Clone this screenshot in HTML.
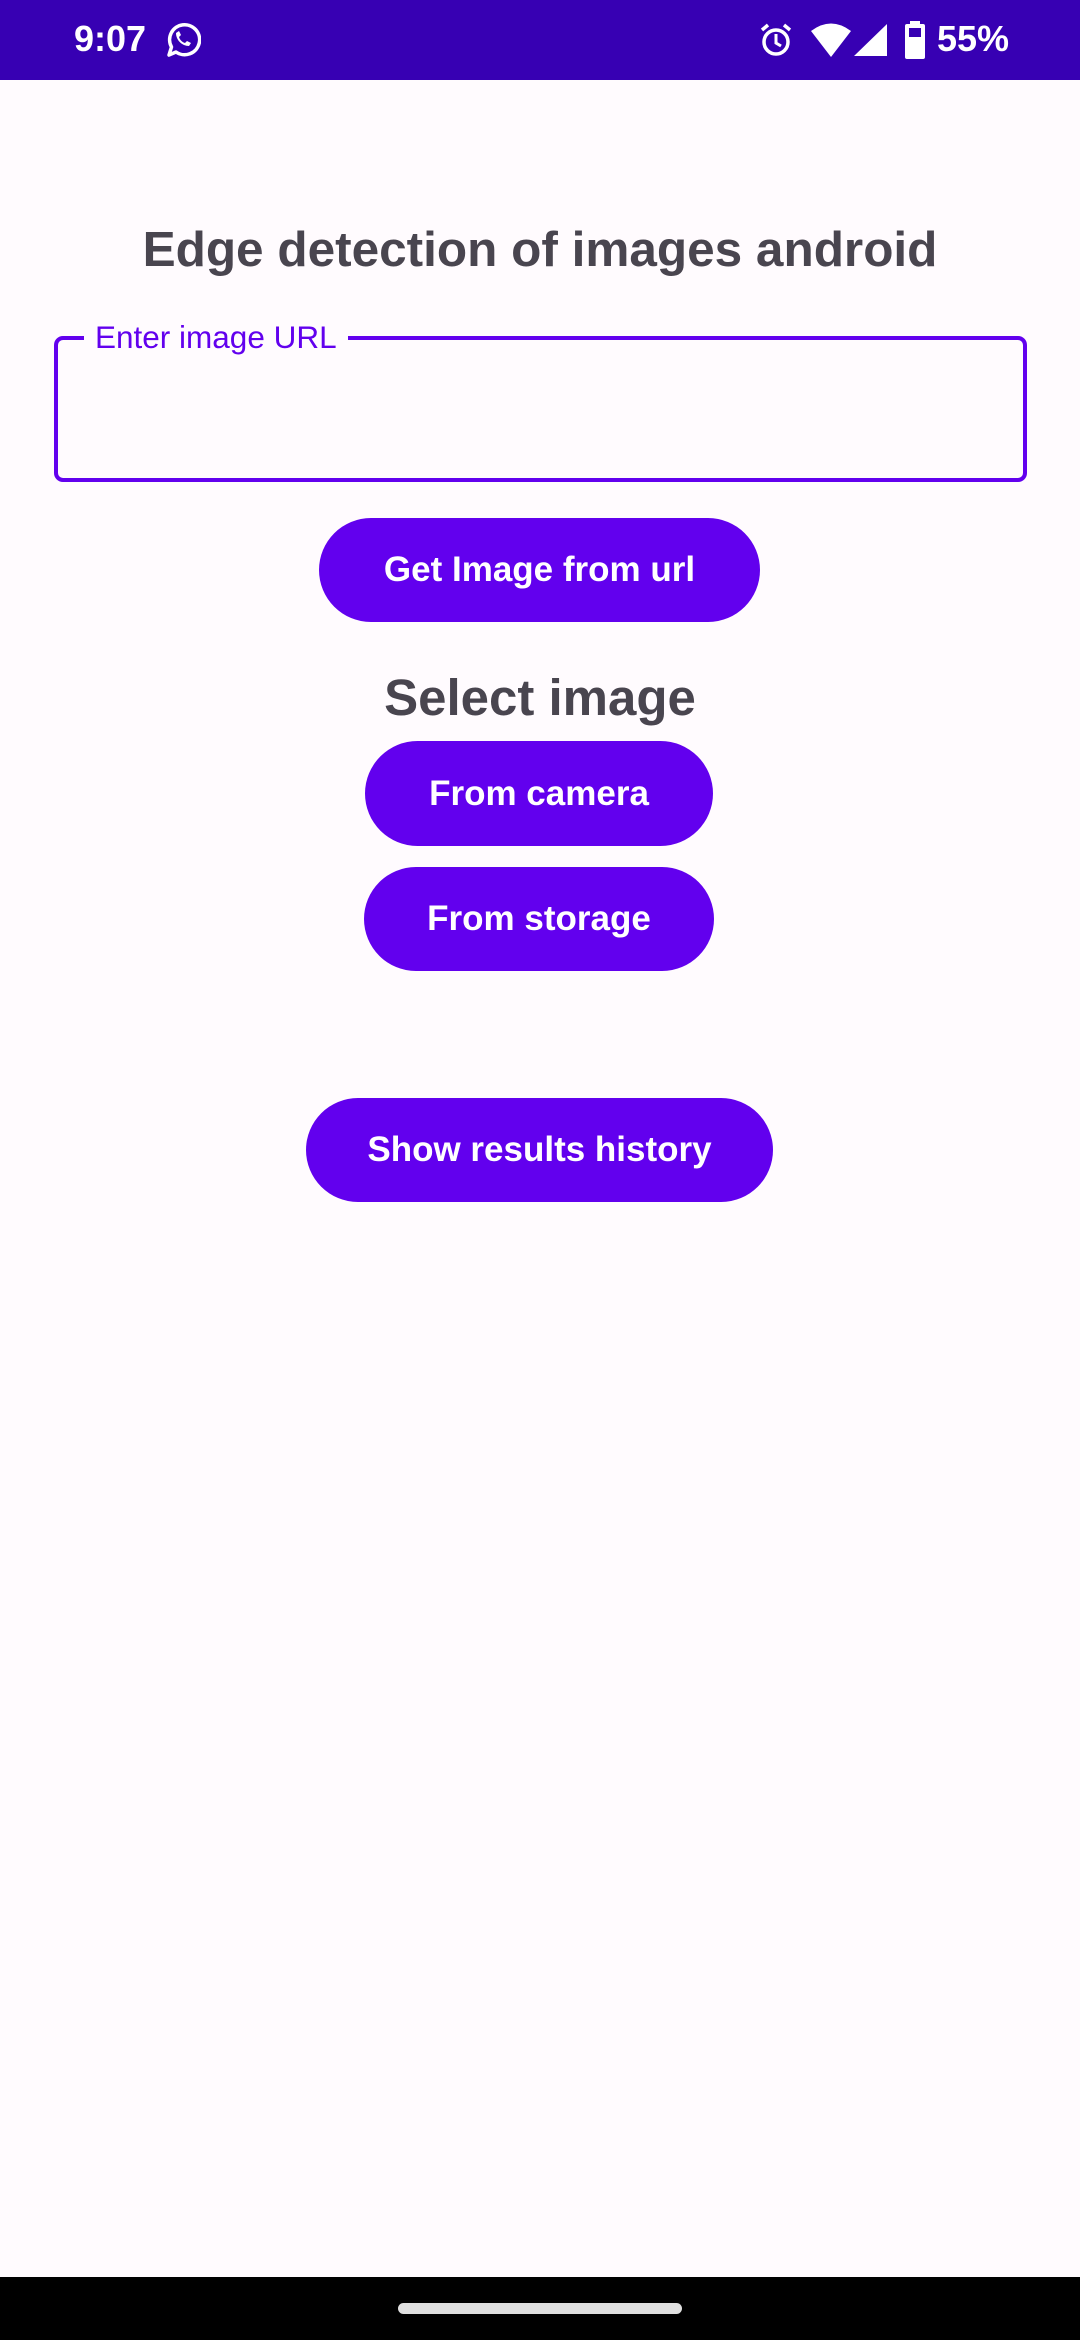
<!DOCTYPE html>
<html><head><meta charset="utf-8"><style>
*{margin:0;padding:0;box-sizing:border-box}
body{width:1080px;height:2340px;background:#FFFBFE;font-family:"Liberation Sans",sans-serif;position:relative;overflow:hidden}
.sb{position:absolute;left:0;top:0;width:1080px;height:80px;background:#3700B3;color:#fff}
.abs{position:absolute}
.btn{position:absolute;background:#6200EE;color:#fff;border-radius:60px;display:flex;align-items:center;justify-content:center;font-weight:bold;font-size:35px}
.h{position:absolute;left:0;width:1080px;text-align:center;color:#49454F;font-weight:bold}
</style></head><body>
<div class="sb">
 <div class="abs" style="left:74px;top:18px;font-size:36px;font-weight:bold">9:07</div>
 <svg class="abs" style="left:163px;top:21px" width="38" height="38" viewBox="0 0 38 38"><path d="M6 34 L8.5 26 A15 15 0 1 1 13 31 Z" fill="none" stroke="#fff" stroke-width="3.5" stroke-linejoin="round"/><path d="M13 12 c0 7 6 13 13 13 l2-3 -4-2 -2 2 c-3-1-5-3-6-6 l2-2 -2-4 z" fill="#fff"/></svg>
 <svg class="abs" style="left:759px;top:22px" width="34" height="36" viewBox="0 0 34 36"><circle cx="17" cy="20" r="12" fill="none" stroke="#fff" stroke-width="3.5"/><path d="M17 12v9l5 3" stroke="#fff" stroke-width="3" fill="none"/><path d="M3 8l6-5M31 8l-6-5" stroke="#fff" stroke-width="3.5"/></svg>
 <svg class="abs" style="left:810px;top:22px" width="42" height="36" viewBox="0 0 42 36"><path d="M1 9 Q21 -6 41 9 L21 35 Z" fill="#fff"/></svg>
 <svg class="abs" style="left:854px;top:24px" width="34" height="32" viewBox="0 0 34 32"><path d="M33 0V32H0Z" fill="#fff"/></svg>
 <svg class="abs" style="left:905px;top:21px" width="20" height="38" viewBox="0 0 20 38"><rect x="5" y="0" width="10" height="4" fill="#fff"/><rect x="0" y="3" width="20" height="35" rx="2" fill="#fff"/><rect x="4" y="7" width="12" height="9" fill="#3700B3"/></svg>
 <div class="abs" style="left:937px;top:18px;font-size:36px;font-weight:bold">55%</div>
</div>
<div class="h" style="top:221px;font-size:49.5px">Edge detection of images android</div>
<div class="abs" style="left:54px;top:336px;width:973px;height:146px;border:4px solid #6200EE;border-radius:9px"></div>
<div class="abs" style="left:84px;top:319px;padding:0 11px;background:#FFFBFE;color:#6200EE;font-size:31.5px">Enter image URL</div>
<div class="btn" style="left:319px;top:518px;width:441px;height:104px">Get Image from url</div>
<div class="h" style="top:668px;font-size:51px">Select image</div>
<div class="btn" style="left:365px;top:741px;width:348px;height:105px">From camera</div>
<div class="btn" style="left:364px;top:867px;width:350px;height:104px">From storage</div>
<div class="btn" style="left:306px;top:1098px;width:467px;height:104px">Show results history</div>
<div class="abs" style="left:0;top:2277px;width:1080px;height:63px;background:#000"></div>
<div class="abs" style="left:398px;top:2303px;width:284px;height:11px;border-radius:6px;background:#E0E0E0"></div>
</body></html>
